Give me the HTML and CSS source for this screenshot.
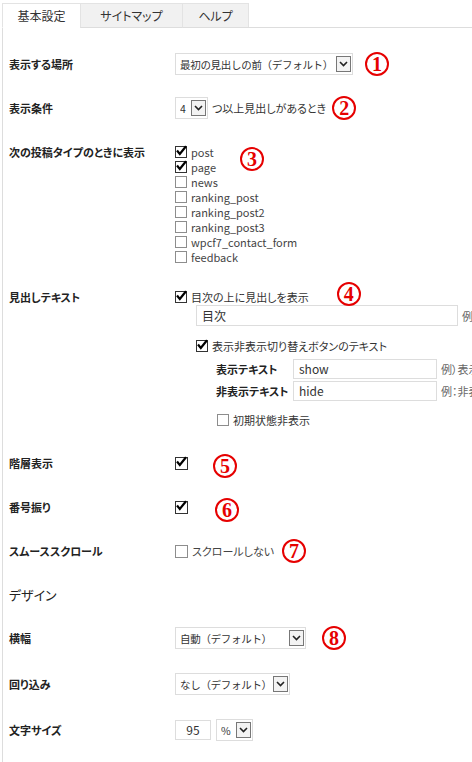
FILE: index.html
```html
<!DOCTYPE html>
<html lang="ja">
<head>
    <meta charset="UTF-8">
    <meta name="viewport" content="width=device-width, initial-scale=1.0">
    <title>目次設定</title>
    <link rel="stylesheet" href="styles.css">
</head>
<body>

<div class="page">
    <div class="tabs">
        <span class="tab tab-active">基本設定</span>
        <span class="tab tab-sitemap">サイトマップ</span>
        <span class="tab tab-help">ヘルプ</span>
        <span class="tab-rest"></span>
    </div>

    <div class="panel">
        <div class="row">
            <div class="label">表示する場所</div>
            <div class="field">
                <span class="select w-pos"><span class="val">最初の見出しの前（デフォルト）</span><span class="arrow"><svg width="9" height="6" viewBox="0 0 9 6"><path d="M1 1l3.5 3.5L8 1" fill="none" stroke="#222" stroke-width="1.6"/></svg></span></span>
                <span class="num n1">1</span>
            </div>
        </div>

        <div class="row">
            <div class="label">表示条件</div>
            <div class="field">
                <span class="select w-count"><span class="val">4</span><span class="arrow"><svg width="9" height="6" viewBox="0 0 9 6"><path d="M1 1l3.5 3.5L8 1" fill="none" stroke="#222" stroke-width="1.6"/></svg></span></span>
                <span class="after">つ以上見出しがあるとき</span>
                <span class="num n2">2</span>
            </div>
        </div>

        <div class="row row-top row-types">
            <div class="label">次の投稿タイプのときに表示</div>
            <div class="field types">
                <label class="check"><span class="cb cb-on"><svg width="12" height="12" viewBox="0 0 12 12"><path d="M2 5.5l2.8 3.4L11 1.2" fill="none" stroke="#000" stroke-width="2.2"/></svg></span>post</label>
                <label class="check"><span class="cb cb-on"><svg width="12" height="12" viewBox="0 0 12 12"><path d="M2 5.5l2.8 3.4L11 1.2" fill="none" stroke="#000" stroke-width="2.2"/></svg></span>page</label>
                <label class="check"><span class="cb"></span>news</label>
                <label class="check"><span class="cb"></span>ranking_post</label>
                <label class="check"><span class="cb"></span>ranking_post2</label>
                <label class="check"><span class="cb"></span>ranking_post3</label>
                <label class="check"><span class="cb"></span>wpcf7_contact_form</label>
                <label class="check"><span class="cb"></span>feedback</label>
                <span class="num n3">3</span>
            </div>
        </div>

        <div class="row row-top row-heading">
            <div class="label">見出しテキスト</div>
            <div class="field stack">
                <label class="check line"><span class="cb cb-on"><svg width="12" height="12" viewBox="0 0 12 12"><path d="M2 5.5l2.8 3.4L11 1.2" fill="none" stroke="#000" stroke-width="2.2"/></svg></span>目次の上に見出しを表示<span class="num n4">4</span></label>
                <div class="title-line">
                    <span class="input w-title">目次</span>
                    <span class="hint">例）目次</span>
                </div>
                <label class="check line toggle"><span class="cb cb-on"><svg width="12" height="12" viewBox="0 0 12 12"><path d="M2 5.5l2.8 3.4L11 1.2" fill="none" stroke="#000" stroke-width="2.2"/></svg></span>表示非表示切り替えボタンのテキスト</label>
                <div class="sub">
                    <div class="sub-row">
                        <span class="sub-label">表示テキスト</span>
                        <span class="input w-sub">show</span>
                        <span class="hint">例）表示</span>
                    </div>
                    <div class="sub-row sub-row-2">
                        <span class="sub-label">非表示テキスト</span>
                        <span class="input w-sub">hide</span>
                        <span class="hint">例：非表示</span>
                    </div>
                </div>
                <label class="check line hidden-start"><span class="cb"></span>初期状態非表示</label>
            </div>
        </div>

        <div class="row">
            <div class="label">階層表示</div>
            <div class="field">
                <span class="cb cb-on cb-big"><svg width="12" height="12" viewBox="0 0 12 12"><path d="M2 5.5l2.8 3.4L11 1.2" fill="none" stroke="#000" stroke-width="2.2"/></svg></span>
                <span class="num n5">5</span>
            </div>
        </div>

        <div class="row">
            <div class="label">番号振り</div>
            <div class="field">
                <span class="cb cb-on cb-big"><svg width="12" height="12" viewBox="0 0 12 12"><path d="M2 5.5l2.8 3.4L11 1.2" fill="none" stroke="#000" stroke-width="2.2"/></svg></span>
                <span class="num n6">6</span>
            </div>
        </div>

        <div class="row">
            <div class="label">スムーススクロール</div>
            <div class="field">
                <label class="check"><span class="cb cb-big"></span>スクロールしない</label>
                <span class="num n7">7</span>
            </div>
        </div>

        <h3 class="section">デザイン</h3>

        <div class="row row-design">
            <div class="label">横幅</div>
            <div class="field">
                <span class="select w-width"><span class="val">自動（デフォルト）</span><span class="arrow"><svg width="9" height="6" viewBox="0 0 9 6"><path d="M1 1l3.5 3.5L8 1" fill="none" stroke="#222" stroke-width="1.6"/></svg></span></span>
                <span class="num n8">8</span>
            </div>
        </div>

        <div class="row row-design">
            <div class="label">回り込み</div>
            <div class="field">
                <span class="select w-float"><span class="val">なし（デフォルト）</span><span class="arrow"><svg width="9" height="6" viewBox="0 0 9 6"><path d="M1 1l3.5 3.5L8 1" fill="none" stroke="#222" stroke-width="1.6"/></svg></span></span>
            </div>
        </div>

        <div class="row row-design">
            <div class="label">文字サイズ</div>
            <div class="field">
                <span class="input w-size">95</span>
                <span class="select w-unit"><span class="val">%</span><span class="arrow"><svg width="9" height="6" viewBox="0 0 9 6"><path d="M1 1l3.5 3.5L8 1" fill="none" stroke="#222" stroke-width="1.6"/></svg></span></span>
            </div>
        </div>
    </div>
</div>

</body>
</html>
```

FILE: styles.css
```css
body {
    margin: 0;
    width: 472px;
    height: 762px;
    overflow: hidden;
    background-color: #ffffff;
    color: #333;
    font-family: "Noto Sans CJK JP", "Noto Sans", sans-serif;
    font-size: 11px;
    font-feature-settings: "palt";
}

.page {
    width: 520px;
}

/* Tabs */
.tabs {
    display: flex;
    padding: 3px 0 0 2px;
}

.tab {
    box-sizing: border-box;
    height: 25px;
    line-height: 23px;
    text-align: center;
    font-size: 12px;
    color: #333;
    background-color: #f1f1f1;
    border: 1px solid #e3e3e3;
    border-bottom-color: #dddddd;
    margin-right: -1px;
}

.tab-active {
    width: 79px;
    background-color: #ffffff;
    border-bottom-color: #ffffff;
}

.tab-sitemap {
    width: 103px;
}

.tab-help {
    width: 67px;
}

.tab-rest {
    flex: 1;
    border-bottom: 1px solid #dddddd;
}

/* Panel */
.panel {
    margin-left: 2px;
    border-left: 1px solid #dddddd;
    padding: 14px 0 40px 6px;
}

.row {
    display: flex;
    align-items: center;
    padding: 11px 0;
}

.row-top {
    align-items: flex-start;
}

.row-types {
    padding: 14px 0 11px;
}

.row-heading {
    padding: 14px 0 13px;
}

.row-design {
    padding: 12px 0;
}

.label {
    width: 166px;
    flex: none;
    font-weight: bold;
    color: #222;
    line-height: 16px;
}

.field {
    display: flex;
    align-items: center;
    min-height: 22px;
}

.section {
    margin: 13px 0 11px;
    font-size: 13px;
    font-weight: normal;
    line-height: 18px;
    color: #222;
}

/* Select */
.select {
    display: inline-flex;
    align-items: center;
    box-sizing: border-box;
    height: 22px;
    padding: 0 1px 0 4px;
    border: 1px solid #dddddd;
    background-color: #ffffff;
    color: #333;
}

.select .val {
    flex: 1;
    white-space: nowrap;
    overflow: hidden;
    font-size: 10.5px;
    letter-spacing: -0.3px;
    font-feature-settings: normal;
}

.arrow {
    display: flex;
    align-items: center;
    justify-content: center;
    box-sizing: border-box;
    flex: none;
    width: 15px;
    height: 16px;
    border: 1px solid #777;
    background-color: #f3f3f3;
}

.w-pos { width: 178px; }
.w-count { width: 33px; }
.w-width { width: 131px; }
.w-float { width: 115px; }
.w-unit { width: 37px; margin-left: 5px; }

.after {
    margin-left: 4px;
    color: #333;
}

/* Inputs */
.input {
    display: inline-block;
    box-sizing: border-box;
    height: 21px;
    padding: 0 5px;
    line-height: 19px;
    border: 1px solid #dddddd;
    background-color: #ffffff;
    color: #333;
    font-size: 12px;
}

.w-title { width: 262px; }
.w-sub { width: 144px; height: 20px; line-height: 18px; }
.w-size { width: 36px; height: 20px; line-height: 18px; text-align: center; }

.hint {
    margin-left: 4px;
    color: #666;
    white-space: nowrap;
}

/* Checkboxes */
.cb {
    position: relative;
    box-sizing: border-box;
    width: 12px;
    height: 12px;
    flex: none;
    margin-right: 4px;
    border: 1px solid #8d8d8d;
    background-color: #ffffff;
}

.cb-on {
    border-color: #333;
}

.cb svg {
    position: absolute;
    left: -1px;
    top: -2px;
    overflow: visible;
}

.cb-big {
    width: 13px;
    height: 13px;
}

.check {
    display: flex;
    align-items: center;
    height: 15px;
    color: #444;
    white-space: nowrap;
}

.types {
    position: relative;
    flex-direction: column;
    align-items: flex-start;
}

/* Heading text block */
.stack {
    flex-direction: column;
    align-items: flex-start;
}

.line {
    height: 16px;
    color: #333;
}

.title-line {
    display: flex;
    align-items: center;
    margin-left: 21px;
}

.toggle {
    margin: 12px 0 0 21px;
}

.sub {
    margin: 5px 0 0 41px;
}

.sub-row {
    display: flex;
    align-items: center;
}

.sub-row-2 {
    margin-top: 2px;
}

.sub-label {
    width: 77px;
    font-weight: bold;
    color: #222;
    white-space: nowrap;
}

.hidden-start {
    margin: 11px 0 0 42px;
}

/* Circled numbers */
.num {
    display: inline-flex;
    align-items: center;
    justify-content: center;
    box-sizing: border-box;
    width: 24px;
    height: 24px;
    margin: -1px 0;
    border: 2.5px solid #e60000;
    border-radius: 50%;
    color: #e60000;
    font-family: "Liberation Serif", serif;
    font-weight: bold;
    font-size: 20px;
    line-height: 1;
    font-feature-settings: normal;
}

.n1 { margin-left: 12px; }
.n2 { margin-left: 6px; }
.n4 { margin: -5px 0 -5px 28px; transform: translateY(-3px); }
.n5 { margin-left: 21px; transform: translateY(3px); }
.n6 { margin-left: 23px; transform: translateY(3px); }
.n7 { margin-left: 8px; }
.n8 { margin-left: 16px; }

.n3 {
    position: absolute;
    left: 65px;
    top: 4px;
}
```
